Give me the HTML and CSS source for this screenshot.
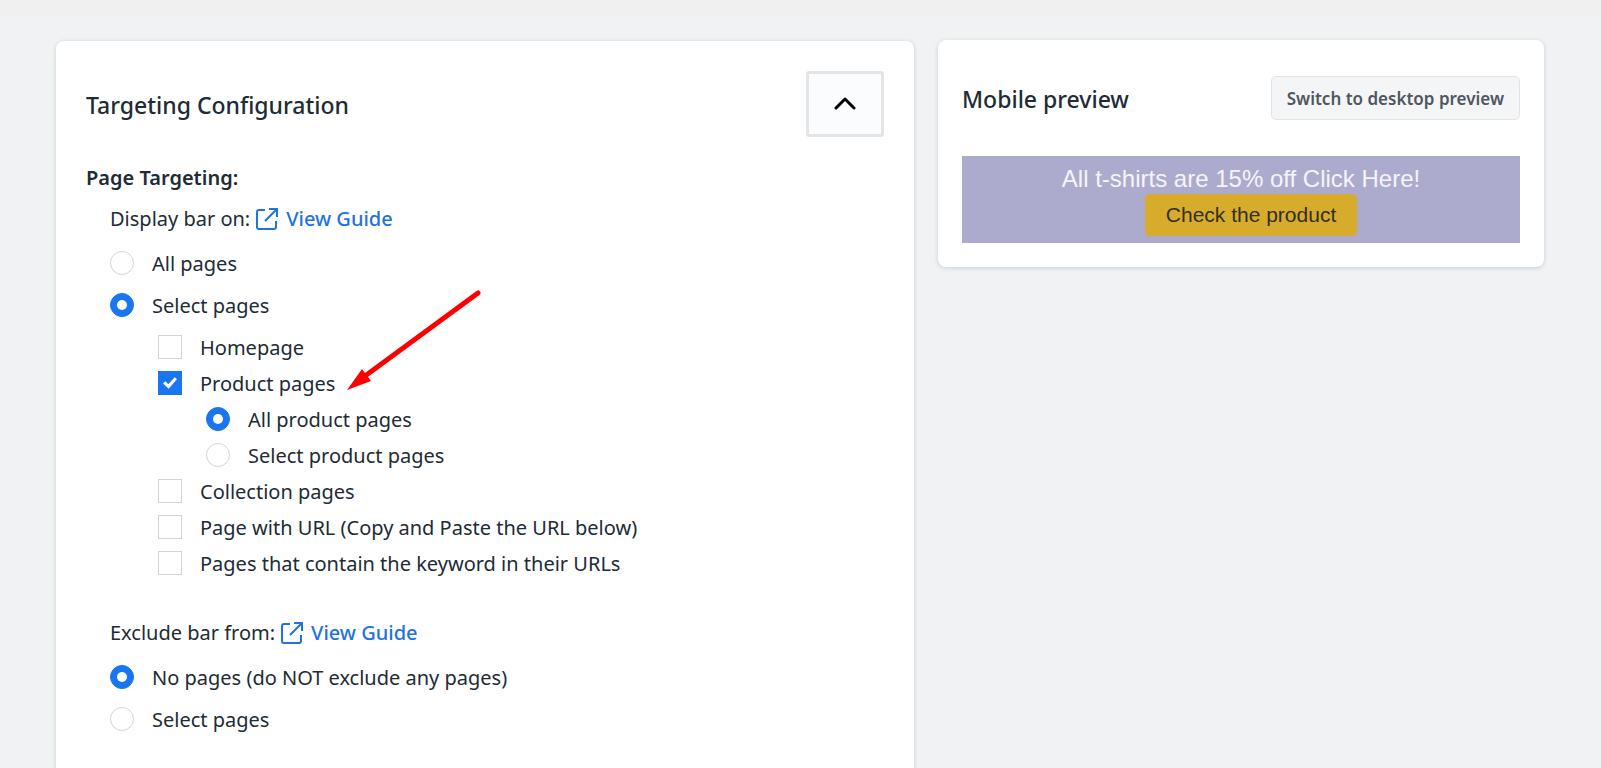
FILE: index.html
```
<!DOCTYPE html>
<html lang="en">
<head>
    <meta charset="UTF-8">
    <meta name="viewport" content="width=device-width, initial-scale=1.0">
    <title>Targeting Configuration</title>
    <link rel="stylesheet" href="styles.css">
</head>
<body>

<div class="topbar"></div>

<main class="layout">
    <section class="card config">
        <div class="config-head">
            <h2>Targeting Configuration</h2>
            <button type="button" class="collapse" aria-label="Collapse">
                <svg width="22" height="14" viewBox="0 0 22 14"><path d="M2 11l9-9 9 9" fill="none" stroke="#000" stroke-width="3" stroke-linecap="round" stroke-linejoin="round"/></svg>
            </button>
        </div>

        <h3>Page Targeting:</h3>

        <div class="group">
            <div class="group-title">
                <span>Display bar on:</span>
                <a href="#">
                    <svg width="22" height="22" viewBox="0 0 22 22" fill="none" stroke="currentColor" stroke-width="2"><path d="M9 2H3a2 2 0 0 0-2 2v15a2 2 0 0 0 2 2h15a2 2 0 0 0 2-2v-6M13 1h8v8M21 1L9 13"/></svg>
                    View Guide
                </a>
            </div>
            <div class="options">
                <label class="option"><input type="radio" name="display"><span>All pages</span></label>
                <label class="option"><input type="radio" name="display" checked><span>Select pages</span></label>
                <div class="nested">
                    <label class="option"><input type="checkbox"><span>Homepage</span></label>
                    <div class="marked">
                        <label class="option"><input type="checkbox" checked><span>Product pages</span></label>
                        <svg class="arrow" width="136" height="104" viewBox="0 0 136 104"><path d="M131 5L18 88" stroke="#f00" stroke-width="5" stroke-linecap="round"/><path d="M0 102L15 81l9 12z" fill="#f00"/></svg>
                    </div>
                    <div class="nested">
                        <label class="option"><input type="radio" name="product" checked><span>All product pages</span></label>
                        <label class="option"><input type="radio" name="product"><span>Select product pages</span></label>
                    </div>
                    <label class="option"><input type="checkbox"><span>Collection pages</span></label>
                    <label class="option"><input type="checkbox"><span>Page with URL (Copy and Paste the URL below)</span></label>
                    <label class="option"><input type="checkbox"><span>Pages that contain the keyword in their URLs</span></label>
                </div>
            </div>
        </div>

        <div class="group">
            <div class="group-title">
                <span>Exclude bar from:</span>
                <a href="#">
                    <svg width="22" height="22" viewBox="0 0 22 22" fill="none" stroke="currentColor" stroke-width="2"><path d="M9 2H3a2 2 0 0 0-2 2v15a2 2 0 0 0 2 2h15a2 2 0 0 0 2-2v-6M13 1h8v8M21 1L9 13"/></svg>
                    View Guide
                </a>
            </div>
            <div class="options">
                <label class="option"><input type="radio" name="exclude" checked><span>No pages (do NOT exclude any pages)</span></label>
                <label class="option"><input type="radio" name="exclude"><span>Select pages</span></label>
            </div>
        </div>
    </section>

    <section class="card preview">
        <div class="preview-head">
            <h2>Mobile preview</h2>
            <button type="button" class="switch">Switch to desktop preview</button>
        </div>
        <div class="banner">
            <div class="banner-text">All t-shirts are 15% off Click Here!</div>
            <button type="button" class="banner-button">Check the product</button>
        </div>
    </section>
</main>

</body>
</html>
```
FILE: styles.css
```
* {
    box-sizing: border-box;
}
body {
    margin: 0;
    background: #f0f2f4;
    color: #212b36;
    font-family: "Segoe UI", "Noto Sans", sans-serif;
    font-size: 20px;
    line-height: 36px;
}
h2, h3 {
    margin: 0;
    font-weight: 500;
}
h2 {
    padding-top: 2px;
    font-size: 23px;
}
h3 {
    font-size: 20px;
    font-weight: 600;
}
button {
    font-family: inherit;
    cursor: pointer;
}
.topbar {
    height: 16px;
    background: #f0f0f0;
}
.layout {
    display: grid;
    grid-template-columns: 858fr 606fr;
    align-items: start;
    gap: 24px;
    padding: 24px 57px 0 56px;
}
.card {
    background: #fff;
    border-radius: 8px;
    box-shadow: 0 1px 4px rgba(33, 43, 54, 0.18);
}

/* left card */
.config {
    margin-top: 1px;
    padding: 30px 30px 48px;
}
.config-head {
    display: flex;
    align-items: center;
    justify-content: space-between;
    margin-bottom: 23px;
}
.collapse {
    display: flex;
    align-items: center;
    justify-content: center;
    width: 78px;
    height: 66px;
    background: #fafcfe;
    border: 3px solid #e4e5e7;
    border-radius: 3px;
}
.group {
    padding: 5px 0 0 24px;
    margin-bottom: 29px;
}
.group:last-child {
    margin-bottom: 0;
}
.group-title {
    display: flex;
    gap: 6px;
    margin-bottom: 8px;
}
.group-title a {
    display: flex;
    align-items: center;
    gap: 8px;
    color: #1f73e0;
    font-weight: 500;
    text-decoration: none;
}
.options {
    display: flex;
    flex-direction: column;
    gap: 6px;
}
.option {
    display: flex;
    align-items: center;
    width: fit-content;
    height: 36px;
    gap: 18px;
}
.option span {
    padding-top: 2px;
}
.nested {
    padding-left: 48px;
}
.option input {
    appearance: none;
    display: grid;
    place-items: center;
    width: 24px;
    height: 24px;
    margin: 0;
    background: #fff;
    border: 1px solid #d2d5d8;
}
.option input[type="radio"] {
    border-radius: 50%;
}
.option input:checked {
    background: #1a75f0;
    border-color: #1a75f0;
}
.option input[type="radio"]:checked::before {
    content: "";
    width: 10px;
    height: 10px;
    background: #fff;
    border-radius: 50%;
}
.option input[type="checkbox"]:checked::before {
    content: "";
    width: 14px;
    height: 12px;
    background: #fff;
    clip-path: polygon(0 54%, 16% 36%, 38% 60%, 84% 2%, 100% 18%, 40% 98%);
}
.marked {
    position: relative;
    width: fit-content;
}
.arrow {
    position: absolute;
    left: calc(100% + 12px);
    bottom: 9px;
}

/* right card */
.preview {
    padding: 36px 24px 24px;
}
.preview-head {
    display: flex;
    align-items: center;
    justify-content: space-between;
    margin-bottom: 36px;
}
.switch {
    height: 44px;
    padding: 0 15px;
    background: #f3f5f7;
    border: 1px solid #e1e3e5;
    border-radius: 5px;
    color: #50575e;
    font-size: 17px;
    font-weight: 600;
}
.banner {
    display: flex;
    flex-direction: column;
    align-items: center;
    padding: 8px 0 7px;
    background: #adabcd;
    font-family: Arial, "Liberation Sans", sans-serif;
}
.banner-text {
    color: #f5f4fa;
    font-size: 24px;
    line-height: 30px;
}
.banner-button {
    height: 42px;
    margin-left: 20px;
    padding: 0 21px;
    background: #d7ab2c;
    border: 0;
    border-radius: 5px;
    color: #33301f;
    font-size: 21px;
}
```
